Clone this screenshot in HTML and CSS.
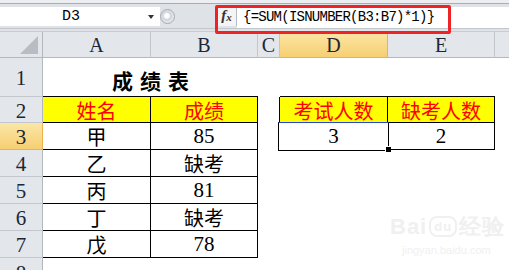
FILE: index.html
```html
<!DOCTYPE html>
<html lang="zh">
<head>
  <meta charset="UTF-8" />
  <title>成绩表</title>
  <link rel="stylesheet" href="styles.css">
</head>
<body>
  <div class="topbar">
    <div class="namebox"><span class="ref">D3</span><span class="arrow"></span></div>
    <div class="knob"></div>
    <div class="fx"><i>f</i><sub>x</sub></div>
    <div class="formula">{=SUM(ISNUMBER(B3:B7)*1)}</div>
    <div class="mark"></div>
  </div>

  <div class="sheet">
    <!-- column headers -->
    <div class="hd corner"></div>
    <div class="hd col">A</div>
    <div class="hd col">B</div>
    <div class="hd col">C</div>
    <div class="hd col sel">D</div>
    <div class="hd col">E</div>
    <div class="hd col last"></div>

    <!-- row 1 -->
    <div class="hd row">1</div>
    <div class="cell title span2 bb">成绩表</div>
    <div class="cell"></div>
    <div class="cell bb"></div>
    <div class="cell bb"></div>
    <div class="cell"></div>

    <!-- row 2 -->
    <div class="hd row">2</div>
    <div class="cell head br bb">姓名</div>
    <div class="cell head br bb">成绩</div>
    <div class="cell br"></div>
    <div class="cell head br bb">考试人数</div>
    <div class="cell head br bb">缺考人数</div>
    <div class="cell"></div>

    <!-- row 3 -->
    <div class="hd row sel">3</div>
    <div class="cell br bb">甲</div>
    <div class="cell num br bb">85</div>
    <div class="cell br"></div>
    <div class="cell num br bb active">3<span class="selbox"></span><span class="handle"></span></div>
    <div class="cell num br bb">2</div>
    <div class="cell"></div>

    <div class="hd row">4</div>
    <div class="cell br bb">乙</div>
    <div class="cell br bb">缺考</div>
    <div class="cell"></div><div class="cell"></div><div class="cell"></div><div class="cell"></div>

    <div class="hd row">5</div>
    <div class="cell br bb">丙</div>
    <div class="cell num br bb">81</div>
    <div class="cell"></div><div class="cell"></div><div class="cell"></div><div class="cell"></div>

    <div class="hd row">6</div>
    <div class="cell br bb">丁</div>
    <div class="cell br bb">缺考</div>
    <div class="cell"></div><div class="cell"></div><div class="cell"></div><div class="cell"></div>

    <div class="hd row">7</div>
    <div class="cell br bb">戊</div>
    <div class="cell num br bb">78</div>
    <div class="cell"></div><div class="cell"></div><div class="cell"></div><div class="cell"></div>

    <div class="hd row">8</div>
    <div class="cell"></div><div class="cell"></div><div class="cell"></div><div class="cell"></div><div class="cell"></div><div class="cell"></div>
  </div>

  <div class="watermark">
    <div class="wm-logo">Bai<span class="paw">du</span>经验</div>
    <div class="wm-url">jingyan.baidu.com</div>
  </div>
</body>
</html>
```

FILE: styles.css
```css
body { margin: 0; width: 509px; height: 270px; overflow: hidden; background: #fff; font-family: "Noto Sans CJK SC", sans-serif; position: relative; }

/* formula bar */
.topbar { position: relative; display: flex; align-items: flex-start; height: 31px; box-sizing: border-box; padding-top: 7px; background: linear-gradient(#eceef1 0 3px, #a9adb3 3px 4px, #dfe3e8 4px 28px, #c3c7cc 28px 29px, #dfe3e8 29px); }
.namebox { position: relative; width: 160px; height: 19px; background: #fff; font: 15px "Liberation Mono", monospace; color: #000; text-align: center; line-height: 20px; }
.namebox .ref { display: inline-block; margin-right: 18px; }
.arrow { position: absolute; left: 148px; top: 8px; border-left: 3px solid transparent; border-right: 3px solid transparent; border-top: 4px solid #333; }
.knob { width: 15px; height: 15px; margin-top: 2px; border-radius: 50%; border: 1px solid #a5aab1; background: radial-gradient(circle at 45% 45%, #fff 0 2px, #cfd3d8 4px, #e9ebee 7px); box-sizing: border-box; }
.fx { width: 19px; height: 19px; margin-left: 42px; border-right: 1px solid #b6bbc2; background: #f2f4f6; font: italic bold 15px "Liberation Serif", serif; color: #333; text-align: center; line-height: 17px; }
.fx sub { font-size: 11px; vertical-align: -1px; }
.formula { flex: 1; height: 21px; padding-left: 6px; background: #fff; font: 14px "Liberation Mono", monospace; letter-spacing: -0.75px; line-height: 21px; color: #000; white-space: nowrap; }
.mark { position: absolute; left: 215px; top: 5px; width: 236px; height: 29px; box-sizing: border-box; border: 3px solid #ee2326; border-radius: 2px; }

/* sheet */
.sheet { display: grid; grid-template-columns: 43px 108px 107px 22px 108px 107px 1fr; grid-template-rows: 27px 39px 26px 27px 27px 27px 27px 27px 1fr; height: 239px; }
.hd { box-sizing: border-box; background: #e3e7ec; color: #1d2636; font: 20px "Liberation Serif", serif; display: flex; align-items: center; justify-content: center; }
.hd.col { border-right: 1px solid #c2c7ce; border-bottom: 1px solid #b3b8bf; border-top: 1px solid #c9cdd3; padding-top: 2px; }
.hd.row { border-right: 1px solid #b3b8bf; border-bottom: 1px solid #c2c7ce; padding-top: 3px; font-size: 21px; }
.hd.sel { background: linear-gradient(#fbe6a6, #f7cf72); border-color: #eeb24a; }
.hd.last { border-right: none; }
.corner { border-right: 1px solid #b3b8bf; border-bottom: 1px solid #b3b8bf; border-top: 1px solid #c9cdd3; position: relative; }
.corner::after { content: ""; position: absolute; right: 4px; bottom: 3px; border-left: 18px solid transparent; border-bottom: 18px solid #b9bdc3; }

.cell { box-sizing: border-box; position: relative; display: flex; align-items: center; justify-content: center; font-size: 20px; color: #000; padding-top: 1px; }
.span2 { grid-column: span 2; }
.br { border-right: 1px solid #000; }
.bb { border-bottom: 1px solid #000; }
.title { font-weight: 700; font-size: 21px; letter-spacing: 7px; padding-left: 7px; padding-top: 6px; }
.head { background: #ffff00; color: #ff0000; }
.num { font-family: "Liberation Serif", serif; font-size: 21px; }

.selbox { position: absolute; left: -2px; top: -1px; right: -2px; bottom: -2px; border: 1px solid #000; border-top-color: #2846d6; box-shadow: inset 0 0 0 1px #fff; }
.handle { position: absolute; right: -5px; bottom: -4px; width: 5px; height: 5px; background: #000; border: 1px solid #fff; }

/* watermark */
.watermark { position: absolute; left: 390px; top: 212px; color: #f0f0f0; font-family: "Liberation Sans", sans-serif; pointer-events: none; }
.wm-logo { font-size: 22px; font-weight: 700; letter-spacing: 1px; }
.paw { display: inline-block; font-size: 13px; padding: 1px 3px; margin: 0 2px; border: 2px solid #f0f0f0; border-radius: 8px; vertical-align: 3px; }
.wm-url { font-size: 11px; margin-left: 12px; margin-top: 2px; }
```
